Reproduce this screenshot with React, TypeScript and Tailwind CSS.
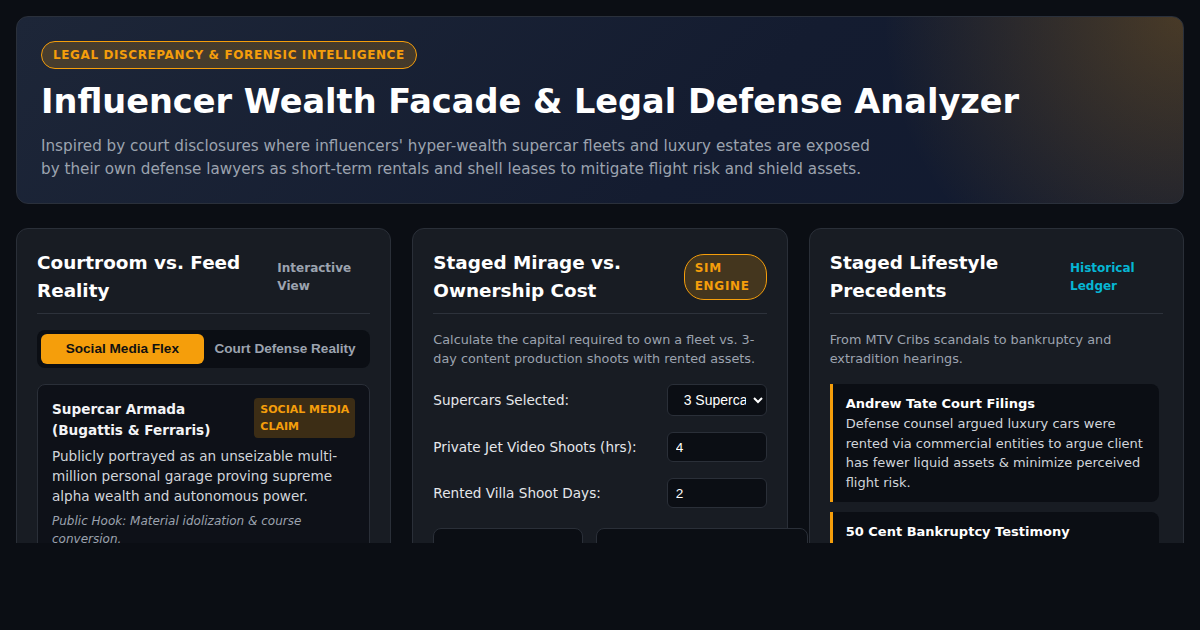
export default function App() {
  return (
    <div className="h-[630px] w-full bg-[#0b0e14] font-['DejaVu_Sans',sans-serif] text-white">
      <div className="h-[543px] overflow-hidden p-4">
        <header className="mb-6 rounded-xl border border-[#2a303b] bg-[radial-gradient(circle_at_100%_0%,rgba(245,158,11,0.24),transparent_300px),linear-gradient(135deg,#1d2638_0%,#141c30_60%,#111a30_100%)] px-6 pb-[22px] pt-6">
          <span className="inline-block rounded-full border border-[#f59e0b] bg-[#f59e0b]/20 px-[11px] py-[5px] text-xs font-bold leading-4 tracking-[0.05em] text-[#f59e0b]">
            LEGAL DISCREPANCY &amp; FORENSIC INTELLIGENCE
          </span>
          <h1 className="mt-[13px] text-[33.6px] font-bold leading-[40px] text-white">
            Influencer Wealth Facade &amp; Legal Defense Analyzer
          </h1>
          <p className="mt-[13px] max-w-[845px] text-[15.2px] leading-[23px] text-[#9ca3af]">
            Inspired by court disclosures where influencers' hyper-wealth supercar fleets and luxury estates are exposed by their own defense lawyers as short-term rentals and shell leases to mitigate flight risk and shield assets.
          </p>
        </header>

        <div className="grid grid-cols-3 gap-[21px]">
          {/* Card 1 */}
          <section className="rounded-xl border border-[#2a2f38] bg-[#181c23] p-5">
            <div className="mb-4 flex items-center justify-between border-b border-[#2d323b] pb-2">
              <h2 className="w-[230px] text-[18.4px] font-bold leading-7">Courtroom vs. Feed Reality</h2>
              <span className="w-[93px] text-xs font-bold leading-[18px] text-[#9ca3af]">Interactive View</span>
            </div>
            <div className="mb-4 flex rounded-lg bg-[#0b0e14] p-1 font-['Liberation_Sans',Arial,sans-serif]">
              <button className="h-[30px] flex-1 rounded-md bg-[#f59e0b] text-[13.6px] font-bold text-[#111]">Social Media Flex</button>
              <button className="h-[30px] flex-1 rounded-md text-[13.6px] font-bold text-[#9ca3af]">Court Defense Reality</button>
            </div>
            <div className="rounded-lg border border-[#2a2f38] bg-[#0e1118] p-[14px]">
              <div className="flex items-start justify-between gap-3">
                <h3 className="text-[13.6px] font-bold leading-[21px] text-[#f3f4f6]">Supercar Armada (Bugattis &amp; Ferraris)</h3>
                <span className="-mt-px shrink-0 rounded bg-[#f59e0b]/20 px-[6px] py-[3px] text-[11px] font-bold leading-[17px] text-[#f59e0b]">
                  SOCIAL MEDIA<br />CLAIM
                </span>
              </div>
              <p className="mt-[5px] text-[13.6px] leading-5 text-[#d1d5db]">
                Publicly portrayed as an unseizable multi-million personal garage proving supreme alpha wealth and autonomous power.
              </p>
              <p className="mt-[6px] text-xs italic leading-[18px] text-[#9ca3af]">
                Public Hook: Material idolization &amp; course conversion.
              </p>
            </div>
          </section>

          {/* Card 2 */}
          <section className="rounded-xl border border-[#2a2f38] bg-[#181c23] p-5">
            <div className="mb-4 flex items-center justify-between border-b border-[#2d323b] pb-2">
              <h2 className="w-[230px] text-[18.4px] font-bold leading-7">Staged Mirage vs. Ownership Cost</h2>
              <span className="w-[83px] rounded-[20px] border border-[#f59e0b] bg-[#f59e0b]/20 px-[10px] py-[4px] text-xs font-bold leading-[18px] tracking-[0.06em] text-[#f59e0b]">
                SIM ENGINE
              </span>
            </div>
            <p className="text-[12.8px] leading-[19px] text-[#9ca3af]">
              Calculate the capital required to own a fleet vs. 3-day content production shoots with rented assets.
            </p>
            <div className="mt-4 space-y-4 text-[13.6px] text-[#e5e7eb]">
              <div className="flex items-center justify-between">
                <label>Supercars Selected:</label>
                <select defaultValue="3" className="h-8 w-[100px] rounded-md border border-[#2a2f38] bg-[#0b0e14] pl-3 pr-1 font-['Liberation_Sans',Arial,sans-serif] text-[14px] text-white">
                  <option value="1">1 Supercar</option>
                  <option value="3">3 Supercars</option>
                  <option value="5">5 Supercars</option>
                </select>
              </div>
              <div className="flex items-center justify-between">
                <label>Private Jet Video Shoots (hrs):</label>
                <input defaultValue="4" className="h-[30px] w-[100px] rounded-md border border-[#2a2f38] bg-[#0b0e14] px-2 font-['Liberation_Sans',Arial,sans-serif] text-[13.6px] text-white outline-none" />
              </div>
              <div className="flex items-center justify-between">
                <label>Rented Villa Shoot Days:</label>
                <input defaultValue="2" className="h-[30px] w-[100px] rounded-md border border-[#2a2f38] bg-[#0b0e14] px-2 font-['Liberation_Sans',Arial,sans-serif] text-[13.6px] text-white outline-none" />
              </div>
            </div>
            <div className="mt-5 flex gap-[13px]">
              <div className="h-24 w-[150px] shrink-0 rounded-lg border border-[#2a2f38] bg-[#0b0e14]" />
              <div className="h-24 w-[212px] shrink-0 rounded-lg border border-[#2a2f38] bg-[#0b0e14]" />
            </div>
          </section>

          {/* Card 3 */}
          <section className="rounded-xl border border-[#2a2f38] bg-[#181c23] p-5">
            <div className="mb-4 flex items-center justify-between border-b border-[#2d323b] pb-2">
              <h2 className="w-[230px] text-[18.4px] font-bold leading-7">Staged Lifestyle Precedents</h2>
              <span className="w-[93px] text-xs font-bold leading-[18px] text-[#06b6d4]">Historical Ledger</span>
            </div>
            <p className="text-[12.8px] leading-[19px] text-[#9ca3af]">
              From MTV Cribs scandals to bankruptcy and extradition hearings.
            </p>
            <div className="mr-1 mt-4 space-y-[10px]">
              <div className="rounded-r-lg border-l-[3px] border-[#f59e0b] bg-[#0b0e14] py-[10px] pl-[13px] pr-3">
                <h4 className="text-[13px] font-bold leading-[20px] text-white">Andrew Tate Court Filings</h4>
                <p className="text-[13px] leading-[19.5px] text-[#d1d5db]">
                  Defense counsel argued luxury cars were rented via commercial entities to argue client has fewer liquid assets &amp; minimize perceived flight risk.
                </p>
              </div>
              <div className="rounded-r-lg border-l-[3px] border-[#f59e0b] bg-[#0b0e14] py-[10px] pl-[13px] pr-3">
                <h4 className="text-[13px] font-bold leading-[20px] text-white">50 Cent Bankruptcy Testimony</h4>
                <p className="text-[13px] leading-[19.5px] text-[#d1d5db]">
                  Testified that luxury items shown in music videos and social posts were rented props, not owned assets.
                </p>
              </div>
            </div>
          </section>
        </div>
      </div>
    </div>
  );
}
